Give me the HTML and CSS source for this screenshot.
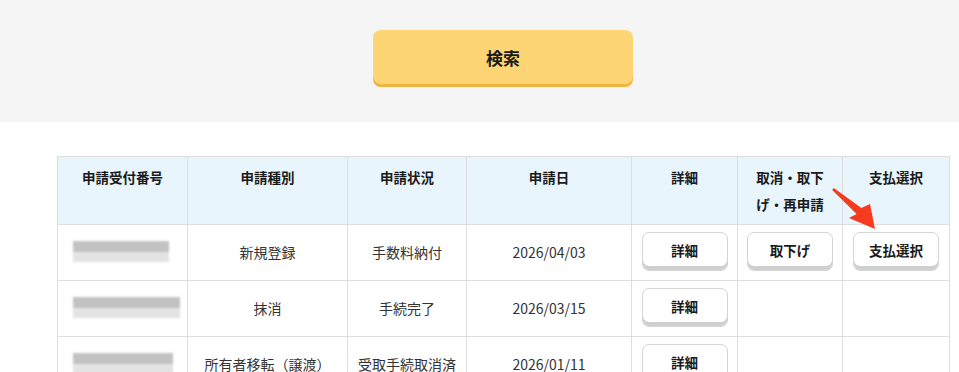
FILE: index.html
```html
<!DOCTYPE html>
<html lang="ja">
<head>
  <meta charset="UTF-8" />
  <title>申請一覧</title>
  <link rel="stylesheet" href="styles.css">
</head>
<body>

<section class="search-area">
  <div class="inner">
    <button type="button" class="search-btn">検索</button>
  </div>
</section>

<main>
  <div class="inner table-wrap">
    <table class="list">
      <colgroup>
        <col style="width:130px"><col style="width:160px"><col style="width:119px"><col style="width:165px"><col style="width:106px"><col style="width:105px"><col style="width:107px">
      </colgroup>
      <thead>
        <tr>
          <th>申請受付番号</th>
          <th>申請種別</th>
          <th>申請状況</th>
          <th>申請日</th>
          <th>詳細</th>
          <th>取消・取下げ・再申請</th>
          <th>支払選択</th>
        </tr>
      </thead>
      <tbody>
        <tr>
          <td class="id"><span class="blur" style="width:96px"></span></td>
          <td>新規登録</td>
          <td>手数料納付</td>
          <td>2026/04/03</td>
          <td><button type="button" class="cell-btn">詳細</button></td>
          <td><button type="button" class="cell-btn">取下げ</button></td>
          <td><button type="button" class="cell-btn">支払選択</button></td>
        </tr>
        <tr>
          <td class="id"><span class="blur" style="width:107px"></span></td>
          <td>抹消</td>
          <td>手続完了</td>
          <td>2026/03/15</td>
          <td><button type="button" class="cell-btn">詳細</button></td>
          <td></td>
          <td></td>
        </tr>
        <tr>
          <td class="id"><span class="blur" style="width:100px"></span></td>
          <td>所有者移転（譲渡）</td>
          <td>受取手続取消済</td>
          <td>2026/01/11</td>
          <td><button type="button" class="cell-btn">詳細</button></td>
          <td></td>
          <td></td>
        </tr>
      </tbody>
    </table>

    <svg class="arrow" viewBox="0 0 55 50">
      <polygon points="5.2,4.9 6.8,3.1 34.4,23.1 43,19 48,44 22,33 29.6,28.9" fill="#f53a1d"/>
    </svg>
  </div>
</main>

</body>
</html>
```

FILE: styles.css
```css
body {
  margin: 0;
  font-family: "Noto Sans CJK JP", "Noto Sans", sans-serif;
  color: #222;
  background-color: #fff;
}

.inner {
  margin-left: 57px;
  width: 892px;
}

.search-area {
  background-color: #f5f5f5;
  padding: 30px 0 35px;
}

.search-btn {
  display: block;
  margin: 0 auto;
  width: 260px;
  height: 57px;
  padding-bottom: 3px;
  border: none;
  border-radius: 8px;
  background-color: #fdd574;
  box-shadow: inset 0 -3px 0 #f2b43f;
  font-family: inherit;
  font-size: 17px;
  font-weight: bold;
  color: #1a1a1a;
  cursor: pointer;
}

main {
  padding-top: 34px;
}

.table-wrap {
  position: relative;
}

.list {
  width: 892px;
  border-collapse: collapse;
  table-layout: fixed;
  font-size: 14px;
}

.list th,
.list td {
  border: 1px solid #dedede;
  text-align: center;
}

.list th {
  background-color: #e9f5fd;
  height: 60px;
  padding: 7px 12px 0;
  vertical-align: top;
  font-size: 13.5px;
  font-weight: bold;
  line-height: 27px;
  color: #1a1a1a;
}

.list td {
  height: 53px;
  padding: 0 8px 2px;
  vertical-align: middle;
  color: #333;
}

.list td.id {
  text-align: left;
  padding-left: 15px;
}

.blur {
  display: block;
  height: 21px;
  background: linear-gradient(to bottom, #c2c2c2 0%, #c2c2c2 52%, #e3e3e3 52%, #e3e3e3 100%);
  filter: blur(1.2px);
}

.cell-btn {
  width: 86px;
  height: 39px;
  padding-bottom: 4px;
  border: 1px solid #d4d4d4;
  border-radius: 7px;
  background-color: #fff;
  box-shadow: inset 0 -4px 0 #cfcfcf;
  font-family: inherit;
  font-size: 13.5px;
  font-weight: bold;
  color: #1a1a1a;
  cursor: pointer;
}

.arrow {
  position: absolute;
  left: 770px;
  top: 29px;
  width: 55px;
  height: 50px;
}
```
